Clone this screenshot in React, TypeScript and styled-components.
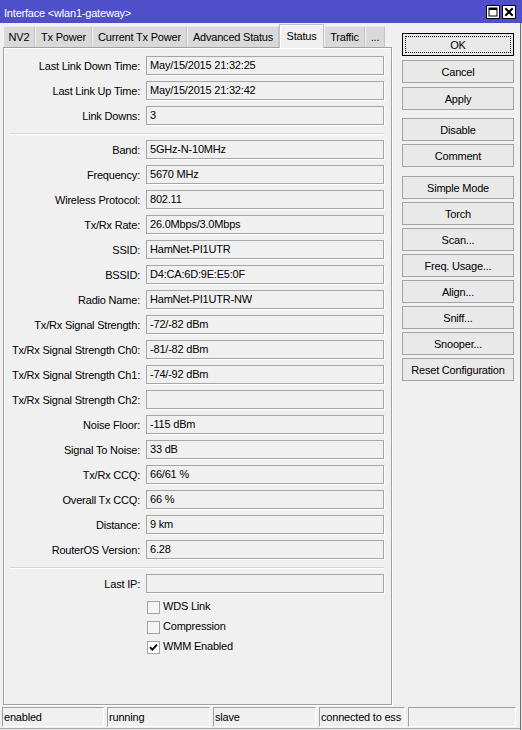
import React from "react";
import styled, { createGlobalStyle } from "styled-components";

const Global = createGlobalStyle`
  html, body { margin: 0; padding: 0; background: #f0f0f0; }
  body {
    font-family: "Liberation Sans", Arial, sans-serif;
    font-size: 11px;
    letter-spacing: -0.2px;
    color: #000;
  }
  * { box-sizing: border-box; }
`;

const Window = styled.div`
  width: 522px;
  height: 730px;
  display: flex;
  flex-direction: column;
  background: #f0f0f0;
  box-shadow: inset -1px 0 0 #e6e6e6, inset -2px 0 0 #707070, inset 0 -1px 0 #e6e6e6, inset 0 -2px 0 #a8a8a8;
  overflow: hidden;
`;

const TitleBar = styled.div`
  height: 23px;
  flex: none;
  background: #4f4fca;
  color: #fff;
  display: flex;
  align-items: center;
  padding: 0 6px 0 4px;
`;

const TitleText = styled.div`
  flex: 1;
  white-space: nowrap;
  padding-top: 2px;
`;

const TitleButtons = styled.div`
  display: flex;
  gap: 2px;
  margin-top: 1px;
`;

const TitleButton = styled.div`
  width: 14px;
  height: 14px;
  background: #fff;
  border: 1px solid #000;
  display: flex;
  align-items: center;
  justify-content: center;
`;

const Body = styled.div`
  flex: 1;
  min-height: 0;
  display: flex;
  padding: 1px 0 0 3px;
`;

const LeftColumn = styled.div`
  width: 389px;
  flex: none;
  display: flex;
  flex-direction: column;
`;

const TabStrip = styled.div`
  height: 23px;
  flex: none;
  display: flex;
  align-items: flex-end;
`;

const Tab = styled.div<{ $w: number; $active?: boolean }>`
  width: ${(p) => p.$w}px;
  flex: none;
  display: flex;
  align-items: center;
  justify-content: center;
  white-space: nowrap;
  position: relative;
  ${(p) =>
    p.$active
      ? `
    height: 24px;
    margin-bottom: -1px;
    padding-bottom: 2px;
    background: #f0f0f0;
    border: 1px solid #c2c2c2;
    border-bottom: none;
    box-shadow: inset 1px 1px 0 #fff;
    z-index: 1;
  `
      : `
    height: 21px;
    background: #d9d9d9;
    border-top: 1px solid #ececec;
    border-left: 1px solid #f2f2f2;
    border-right: 1px solid #c4c4c4;
  `}
`;

const Panel = styled.div`
  flex: 1;
  border: 1px solid #a0a0a0;
  box-shadow: 1px 1px 0 #fff, inset 1px 1px 0 #fff;
  padding: 8px 7px 0 0;
  display: flex;
  flex-direction: column;
`;

const Section = styled.div`
  display: flex;
  flex-direction: column;
  gap: 6px;
`;

const Separator = styled.div`
  height: 1px;
  width: 374px;
  margin: 8px 0 6px 6px;
  background: #d6d6d6;
  box-shadow: 0 1px 0 #fff;
`;

const Row = styled.div`
  display: grid;
  grid-template-columns: 136px 238px;
  column-gap: 6px;
  align-items: center;
  height: 19px;
`;

const Label = styled.div`
  text-align: right;
  white-space: nowrap;
`;

const Field = styled.div`
  height: 19px;
  border: 1px solid #a6a6a6;
  box-shadow: 1px 1px 0 #fff;
  padding: 0 3px 0 3px;
  line-height: 17px;
  white-space: nowrap;
  overflow: hidden;
`;

const CheckList = styled.div`
  display: flex;
  flex-direction: column;
  margin-top: 4px;
`;

const CheckRow = styled.div`
  display: grid;
  grid-template-columns: 136px 238px;
  column-gap: 6px;
  height: 20px;
`;

const CheckLabel = styled.label`
  display: flex;
  align-items: flex-start;
  gap: 3px;
  line-height: 19px;
`;

const Box = styled.span<{ $checked?: boolean }>`
  width: 13px;
  height: 13px;
  margin: 4px 0 0 1px;
  flex: none;
  border: 1px solid #a3a3a3;
  background: ${(p) => (p.$checked ? "#fff" : "#f4f4f4")};
  display: flex;
  align-items: center;
  justify-content: center;
`;

const RightColumn = styled.div`
  width: 112px;
  margin: 9px 0 0 10px;
  display: flex;
  flex-direction: column;
`;

const ButtonGroup = styled.div<{ $gap: number; $mt: number }>`
  display: flex;
  flex-direction: column;
  gap: ${(p) => p.$gap}px;
  margin-top: ${(p) => p.$mt}px;
`;

const Button = styled.button<{ $default?: boolean }>`
  height: 23px;
  margin: 0;
  padding: 0;
  font: inherit;
  letter-spacing: inherit;
  color: #000;
  background: #e9e9e9;
  border: 1px solid ${(p) => (p.$default ? "#000" : "#a3a3a3")};
  position: relative;
  display: flex;
  align-items: center;
  justify-content: center;
  ${(p) =>
    p.$default
      ? `
    &::after {
      content: "";
      position: absolute;
      inset: 2px;
      border: 1px dotted #000;
    }
  `
      : ""}
`;

const StatusBar = styled.div`
  height: 25px;
  flex: none;
  padding: 2px 0 0 2px;
  display: grid;
  grid-template-columns: 102px 103px 103px 86px 108px;
  grid-template-rows: 20px;
  column-gap: 3px;
`;

const StatusCell = styled.div`
  border: 1px solid;
  border-color: #a0a0a0 #fff #fff #a0a0a0;
  padding-left: 1px;
  line-height: 18px;
  white-space: nowrap;
  overflow: hidden;
`;

const tabs: { label: string; w: number; active?: boolean }[] = [
  { label: "NV2", w: 32 },
  { label: "Tx Power", w: 57 },
  { label: "Current Tx Power", w: 95 },
  { label: "Advanced Status", w: 92 },
  { label: "Status", w: 45, active: true },
  { label: "Traffic", w: 41 },
  { label: "...", w: 20 },
];

const section1: [string, string][] = [
  ["Last Link Down Time:", "May/15/2015 21:32:25"],
  ["Last Link Up Time:", "May/15/2015 21:32:42"],
  ["Link Downs:", "3"],
];

const section2: [string, string][] = [
  ["Band:", "5GHz-N-10MHz"],
  ["Frequency:", "5670 MHz"],
  ["Wireless Protocol:", "802.11"],
  ["Tx/Rx Rate:", "26.0Mbps/3.0Mbps"],
  ["SSID:", "HamNet-PI1UTR"],
  ["BSSID:", "D4:CA:6D:9E:E5:0F"],
  ["Radio Name:", "HamNet-PI1UTR-NW"],
  ["Tx/Rx Signal Strength:", "-72/-82 dBm"],
  ["Tx/Rx Signal Strength Ch0:", "-81/-82 dBm"],
  ["Tx/Rx Signal Strength Ch1:", "-74/-92 dBm"],
  ["Tx/Rx Signal Strength Ch2:", ""],
  ["Noise Floor:", "-115 dBm"],
  ["Signal To Noise:", "33 dB"],
  ["Tx/Rx CCQ:", "66/61 %"],
  ["Overall Tx CCQ:", "66 %"],
  ["Distance:", "9 km"],
  ["RouterOS Version:", "6.28"],
];

const checks: { label: string; checked: boolean }[] = [
  { label: "WDS Link", checked: false },
  { label: "Compression", checked: false },
  { label: "WMM Enabled", checked: true },
];

const buttonGroups: { gap: number; mt: number; items: string[] }[] = [
  { gap: 4, mt: 0, items: ["OK", "Cancel", "Apply"] },
  { gap: 3, mt: 8, items: ["Disable", "Comment"] },
  {
    gap: 3,
    mt: 9,
    items: [
      "Simple Mode",
      "Torch",
      "Scan...",
      "Freq. Usage...",
      "Align...",
      "Sniff...",
      "Snooper...",
      "Reset Configuration",
    ],
  },
];

const statusCells = ["enabled", "running", "slave", "connected to ess", ""];

const MaxIcon = () => (
  <svg width="10" height="10" viewBox="0 0 10 10">
    <rect x="1" y="1" width="8" height="8" fill="none" stroke="#000" strokeWidth="1" />
    <rect x="1" y="1" width="8" height="2" fill="#000" />
  </svg>
);

const CloseIcon = () => (
  <svg width="10" height="10" viewBox="0 0 10 10">
    <path d="M2 2 L8 8 M8 2 L2 8" stroke="#000" strokeWidth="2" strokeLinecap="square" />
  </svg>
);

const CheckMark = () => (
  <svg width="9" height="9" viewBox="0 0 9 9">
    <polyline points="1,4.2 3.4,6.6 8,1.6" fill="none" stroke="#000" strokeWidth="1.8" />
  </svg>
);

export default function App() {
  return (
    <>
      <Global />
      <Window>
        <TitleBar>
          <TitleText>Interface &lt;wlan1-gateway&gt;</TitleText>
          <TitleButtons>
            <TitleButton>
              <MaxIcon />
            </TitleButton>
            <TitleButton>
              <CloseIcon />
            </TitleButton>
          </TitleButtons>
        </TitleBar>
        <Body>
          <LeftColumn>
            <TabStrip>
              {tabs.map((t) => (
                <Tab key={t.label} $w={t.w} $active={t.active}>
                  {t.label}
                </Tab>
              ))}
            </TabStrip>
            <Panel>
              <Section>
                {section1.map(([l, v]) => (
                  <Row key={l}>
                    <Label>{l}</Label>
                    <Field>{v}</Field>
                  </Row>
                ))}
              </Section>
              <Separator />
              <Section>
                {section2.map(([l, v]) => (
                  <Row key={l}>
                    <Label>{l}</Label>
                    <Field>{v}</Field>
                  </Row>
                ))}
              </Section>
              <Separator />
              <Section>
                <Row>
                  <Label>Last IP:</Label>
                  <Field />
                </Row>
              </Section>
              <CheckList>
                {checks.map((c) => (
                  <CheckRow key={c.label}>
                    <span />
                    <CheckLabel>
                      <Box $checked={c.checked}>{c.checked && <CheckMark />}</Box>
                      {c.label}
                    </CheckLabel>
                  </CheckRow>
                ))}
              </CheckList>
            </Panel>
          </LeftColumn>
          <RightColumn>
            {buttonGroups.map((g, gi) => (
              <ButtonGroup key={gi} $gap={g.gap} $mt={g.mt}>
                {g.items.map((b) => (
                  <Button key={b} $default={b === "OK"}>
                    {b}
                  </Button>
                ))}
              </ButtonGroup>
            ))}
          </RightColumn>
        </Body>
        <StatusBar>
          {statusCells.map((s, i) => (
            <StatusCell key={i}>{s}</StatusCell>
          ))}
        </StatusBar>
      </Window>
    </>
  );
}
